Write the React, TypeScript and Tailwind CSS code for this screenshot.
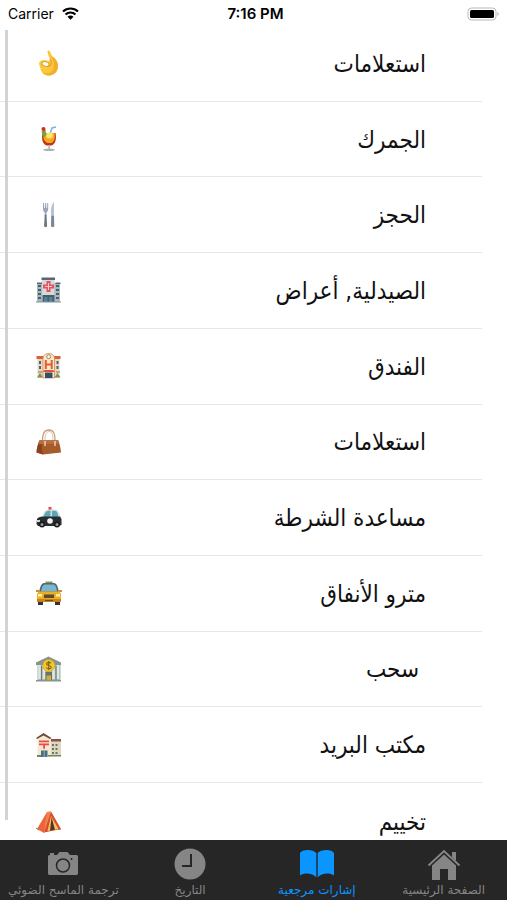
import type { ReactNode } from 'react';
import clsx from 'clsx';

interface ICategory {
  id: string;
  title: string;
  icon: ReactNode;
}

interface ITab {
  id: string;
  title: string;
  icon: ReactNode;
}

const categories: ICategory[] = [
  {
    id: 'basics',
    title: 'استعلامات',
    icon: (
      <>
        <path
          d="M11.500 2c0-1.800 2-1.900 2.600-.3l2.200 4.800c3.700 2 5.700 5.500 5.700 9.500 0 5.500-4 9.500-9 9.500-4 0-6.500-2-7.800-4.500L3.400 15c-.8-2.500.6-4.500 3-4.700 2.500-.3 5 0 6.600.7l1-2.500c-1.300-2-2.300-4.500-2.500-6.500z"
          fill="#fcc73c"
        />
        <path d="m15 6 2 1c3 2 5 5.500 5 9 0 5-3.500 9.500-9 9.500-3 0-5.500-1.500-7-3 5 2 10 .5 11.500-4 1-4 0-8.500-2.500-12.500z" fill="#f0b02c" />
        <ellipse cx="9.500" cy="14" rx="3.600" ry="2.200" transform="rotate(15 9.500 14)" fill="#fff" stroke="#dd961c" strokeWidth="1" />
        <path d="M14 8.500c1.700 2.500 1.700 6-.5 8" fill="none" stroke="#df9a20" strokeWidth="1" />
      </>
    ),
  },
  {
    id: 'customs',
    title: 'الجمرك',
    icon: (
      <>
        <path d="m14 8 2-6 4-1" fill="none" stroke="#72b8df" strokeWidth="1.500" />
        <path d="M6.500 7h13c1 5 .5 11-4 12.500h-5C6 18 5.500 12 6.500 7z" fill="#c3341b" />
        <path d="M7.500 7h11c.8 4 0 8.500-3 10h-4c-4-1.500-4.500-6-4-10z" fill="#f5a91e" />
        <ellipse cx="13.500" cy="9.500" rx="3.500" ry="3" fill="#ffe36b" />
        <path d="m5.500 5 4-1 1 5-3 3z" fill="#75a53a" />
        <circle cx="7.500" cy="3" r="2" fill="#cf2a25" />
        <path d="M12.300 19.500h1.700V23h-1.700z" fill="#b9bcc0" />
        <ellipse cx="13" cy="23.800" rx="6" ry="1.200" fill="#adb0b3" />
      </>
    ),
  },
  {
    id: 'booking',
    title: 'الحجز',
    icon: (
      <>
        <path d="M7 1h1l.3 5h.7l.2-5h1l.2 5h.7L11.300 1h.9v6c0 2-1 3-1.700 3.500V14H8.700v-3.500C8 10 7 9 7 7z" fill="#9aa6b5" />
        <path d="M8.700 13h1.800l.6 11c0 1.500-3 1.500-3 0z" fill="#6d7580" />
        <path d="M17.500.5c-2 2-3 6-2.500 13h3V.5z" fill="#b5c4d6" />
        <path d="M15.200 13.500H18l.3 10.500c0 1.500-3.300 1.500-3.300 0z" fill="#7c8796" />
      </>
    ),
  },
  {
    id: 'pharmacy',
    title: 'الصيدلية, أعراض',
    icon: (
      <>
        <path d="M1 6h7v19H1zM18 6h6v19h-6z" fill="#a9b6bd" />
        <path d="M1 5.500h5V7H1zM19.500 5.500h5V7h-5zM5.500.5H19V3H5.500z" fill="#596770" />
        <path d="M6 3h12.500v22H6z" fill="#d6d8d9" />
        <path d="M2 9h3M2 13h3M2 17h3M2 21h3M20 9h3M20 13h3M20 17h3M20 21h3" stroke="#426174" strokeWidth="2" />
        <path d="M10.500 4h4v3.500H18v4h-3.500V15h-4v-3.500H7v-4h3.500z" fill="#e45260" />
        <path d="M12.500 6v7M9 9.500h7" stroke="#f6c9cd" strokeWidth="1" />
        <path d="M6.500 18h12v7h-12z" fill="#4c5b64" />
        <path d="M8 20h3.500v5H8zM13 20h3.500v5H13z" fill="#4a84a5" />
        <path d="M0 24.500h25v1H0z" fill="#81949c" />
      </>
    ),
  },
  {
    id: 'hotel',
    title: 'الفندق',
    icon: (
      <>
        <path d="M1.500 4h22v21h-22z" fill="#e5d9c0" />
        <path d="M.5 3h24v3H.5z" fill="#dc6139" />
        <path d="M7 25V5c0-6 11.500-6 11.500 0v20z" fill="#f7e9cb" stroke="#d6754d" strokeWidth=".7" />
        <circle cx="12.700" cy="3.700" r="2" fill="#fff3ce" stroke="#88764c" strokeWidth=".8" />
        <path d="M3 8h2v3H3zM3 13h2v3H3zM20.500 8h2v3h-2zM20.500 13h2v3h-2z" fill="#4c6375" />
        <path d="M9.800 7v9M15.700 7v9M9.800 11.500h6" stroke="#e35b2e" strokeWidth="2" />
        <path d="m6.500 19 2-2h8.500l2 2z" fill="#dd5633" />
        <path d="M9 19.500h7.500V25H9z" fill="#345066" />
        <path d="M1 24.500 4 20l3 4.500M18.500 24.500l3-4.500 3 4.500" fill="#7d9354" />
        <path d="M2 19h4M20 19h4" stroke="#b79773" strokeWidth="1.500" />
      </>
    ),
  },
  {
    id: 'shopping',
    title: 'استعلامات',
    icon: (
      <>
        <path d="M6.500 13C6.500 6 7.500 1 13 1s6 5 6 12" fill="none" stroke="#c69f86" strokeWidth="1.300" />
        <path d="M9 13c0-6 .5-10 4-10.500s4 4.500 4 10.500" fill="none" stroke="#e2c6b3" strokeWidth="1" />
        <path d="M3.500 11.500 22 11c1.500 3 2.700 8 3 12.500L7 25.500.5 23.500c.2-4 1.500-9 3-12z" fill="#a65b2b" />
        <path d="M3.500 11.500c-1.500 3-2.800 8-3 12l6.500 2c-1-4-1.500-9-1-14z" fill="#8a441d" />
        <path d="m3.500 11.500 18.500-.5 1.300 3.500-21 .5z" fill="#bc7040" />
        <path d="M9 12v5M19 12v5" stroke="#e6cdbd" strokeWidth="1.500" />
      </>
    ),
  },
  {
    id: 'police',
    title: 'مساعدة الشرطة',
    icon: (
      <>
        <path d="M12.500 2h3v3h-3z" fill="#e74848" />
        <path d="M6 13c1-5 3-8.500 6-8.500h7c3 0 4.500 4 6 9v4H6z" fill="#d9dee0" />
        <path d="M7.500 12c1-4 2.500-6.300 5-6.300h2V12zM16 5.700h3c2 0 3 3 3.500 6.300H16z" fill="#5ba9b8" />
        <path d="M1 14c1-2 4-2.500 8-2.500h15l1.500 2.500v6l-3 1H2l-1.500-2z" fill="#292d30" />
        <circle cx="14" cy="16" r="2.800" fill="#f4f4f2" />
        <path d="M1 15h3v2H1z" fill="#d3d7d5" />
        <circle cx="6" cy="19.500" r="3" fill="#161a1d" />
        <circle cx="21" cy="19.500" r="3" fill="#161a1d" />
        <circle cx="6" cy="19.500" r="1.500" fill="#929a9f" />
        <circle cx="21" cy="19.500" r="1.500" fill="#929a9f" />
      </>
    ),
  },
  {
    id: 'metro',
    title: 'مترو الأنفاق',
    icon: (
      <>
        <path d="M9.500 1.500h7v3h-7z" fill="#88994c" />
        <path d="M2 19h5v6H2zM19 19h5v6h-5z" fill="#303338" />
        <path d="M3 13C4 6 5.500 3.500 8 3h10c2.500.5 4 3 5 10z" fill="#526774" />
        <path d="M5 11.500c.7-4.500 2-7 4-7h8c2 0 3.500 2.500 4 7z" fill="#79b6d2" />
        <path d="M1 13.500 3 11.500h20l2 2v8.500H1z" fill="#eeae24" />
        <path d="M0 10h3v2H0zM23 10h3v2h-3z" fill="#d98e24" />
        <path d="M8 14.500h10V18H8z" fill="#574d30" />
        <path d="M2 14h4v2.500H2zM20 14h4v2.500h-4z" fill="#fff1ac" />
        <path d="M1 19h24v3H1z" fill="#c98216" />
        <path d="M9 20h8v1H9z" fill="#5d5030" />
      </>
    ),
  },
  {
    id: 'withdraw',
    title: '\u00A0سحب',
    icon: (
      <>
        <path d="M1.500 7 12.500 1l12 6v18h-23z" fill="#a7b8b1" />
        <path d="m0 6.500 12.500-6L25 6.500V9H0z" fill="#84958f" />
        <path d="M3.500 9v14M8 9v14M17.500 9v14M22 9v14" stroke="#e1e7df" strokeWidth="2.500" />
        <path d="M5.500 10v14M20 10v14" stroke="#657d7d" strokeWidth="1" />
        <path d="M9.500 16H16v9H9.500z" fill="#65756d" />
        <path d="M10.500 19.500h4.500v4.500h-4.500z" fill="#d8aa31" />
        <circle cx="12.700" cy="9.500" r="6" fill="#f4c72a" stroke="#d8a51c" strokeWidth=".8" />
        <path
          d="M15 7.300c-1-1.500-4.500-1.200-4.500.6 0 2 4.700 1.200 4.700 3.300 0 1.800-3.800 2-4.900.3M12.700 5v9"
          fill="none"
          stroke="#776126"
          strokeWidth="1.100"
        />
        <path d="M0 24h25v1.500H0z" fill="#84958f" />
      </>
    ),
  },
  {
    id: 'post',
    title: 'مكتب البريد',
    icon: (
      <>
        <path d="M14 8h11v16H14z" fill="#ddd8bb" />
        <path d="M14 7h11v2.500H14z" fill="#8a5049" />
        <path d="M16 12h2v2h-2zM19.500 12h2v2h-2zM16 16h2v2h-2zM19.500 16h2v2h-2zM16 20h2v2h-2zM19.500 20h2v2h-2z" fill="#66766f" />
        <path d="M1.500 5.500 8 2l7 3.500V25H1.500z" fill="#f2e9ce" />
        <path d="m0 6 7.500-5L15.500 6 14 7 7.500 3.500 1 7z" fill="#665044" />
        <path d="M3 8.500h10v1.700H3zM3 11.500h10v1.700H9v3.500H7.200v-3.500H3z" fill="#ed4a4c" />
        <path d="M5 18.500h6.500V25H5z" fill="#477084" />
        <path d="M8.200 19v6" stroke="#a9c2ca" strokeWidth=".8" />
        <path d="M1 23h4v2H1zM12 23h13v1.500H12z" fill="#75825c" />
      </>
    ),
  },
  {
    id: 'camping',
    title: 'تخييم',
    icon: (
      <>
        <path d="M11 4 1 21l7 4 8-19z" fill="#ed6639" />
        <path d="M15 3.500 25 21 8 24.500z" fill="#d94b2b" />
        <path d="M15 8 22.500 21l-11 2z" fill="#f1c45f" />
        <path d="m15.500 9 3.500 12.700-5 1z" fill="#593427" />
        <path d="m11 4 4-1-7 22" fill="#f18354" />
        <path d="m0 20 3 2M25 21l-3 .5" stroke="#ad6b4a" strokeWidth="1" />
      </>
    ),
  },
];

const tabs: ITab[] = [
  {
    id: 'home',
    title: 'الصفحة الرئيسية',
    icon: (
      <>
        <path d="M1.500 17.500 17 3l15.500 14.500" fill="none" stroke="currentColor" strokeWidth="2" />
        <path d="M25 4h4v9l-4-4zM5 17.500 17 6.500l12 11V32h-8V21h-8v11H5z" fill="currentColor" />
      </>
    ),
  },
  {
    id: 'phrases',
    title: 'إشارات مرجعية',
    icon: (
      <path
        d="M0 5c2-4 13-4 16.300 0v24.500C13 25.500 5 24 0 27.500zM17.700 5C21 1 32 1 34 5v22.500c-5-3.500-13-2-16.300 2z"
        fill="currentColor"
      />
    ),
  },
  {
    id: 'history',
    title: 'التاريخ',
    icon: (
      <>
        <circle cx="17" cy="16" r="15.500" fill="currentColor" />
        <path d="M18 6v12H9" fill="none" stroke="#262626" strokeWidth="2" />
      </>
    ),
  },
  {
    id: 'scanner',
    title: 'ترجمة الماسح الضوئي',
    icon: (
      <>
        <path
          d="M4 5h4v2h3l2.500-3h8L24 7h6c1.500 0 2 .5 2 2v16c0 1.500-.5 2-2 2H4c-1.500 0-2-.5-2-2V9c0-1.500.5-2 2-2z"
          fill="currentColor"
        />
        <circle cx="17" cy="17.500" r="6.500" fill="none" stroke="#262626" strokeWidth="1.500" />
        <circle cx="25.500" cy="11" r="1" fill="#262626" />
      </>
    ),
  },
];

function StatusBar() {
  return (
    <header
      dir="ltr"
      className="grid h-[26px] shrink-0 grid-cols-3 items-center px-2 pt-px font-['Inter',sans-serif] text-sm leading-5 text-black"
    >
      <div className="flex items-center gap-2">
        <span>Carrier</span>
        <svg viewBox="0 0 17 13" className="h-[13px] w-[17px]" aria-hidden="true">
          <path d="M1 4.500c4.300-4 10.700-4 15 0M3.500 7.500c3-2.700 7-2.700 10 0" fill="none" stroke="#000" strokeWidth="2.200" />
          <path d="M5.500 9.700c1.800-1.500 4.200-1.500 6 0l-3 3z" fill="#000" />
        </svg>
      </div>
      <span className="pl-1 text-center text-[15px] font-semibold">7:16 PM</span>
      <svg viewBox="0 0 32 14" className="h-[14px] w-8 justify-self-end" aria-label="Battery">
        <rect x="1" y="1" width="28" height="12" rx="3.500" fill="#fff" stroke="#b8b8b8" />
        <rect x="3" y="3" width="24" height="8" rx="1.500" fill="#000" />
        <path d="M30.500 5c1.500.5 1.500 3.500 0 4z" fill="#aaa" />
      </svg>
    </header>
  );
}

function CategoryRow({ category, isLast }: { category: ICategory; isLast: boolean }) {
  return (
    <li
      className={clsx(
        'mr-[25px]',
        isLast ? 'h-[57px] shrink-0 overflow-hidden' : 'flex min-h-14 flex-1 border-b border-[#e6e6e6]',
      )}
    >
      <a
        href={`#${category.id}`}
        className={clsx('flex w-full items-center justify-between pr-14 pl-9', isLast && 'h-[76px]')}
      >
        <span className="pt-px text-2xl leading-8">{category.title}</span>
        <svg viewBox="0 0 26 26" className="size-[26px] shrink-0" aria-hidden="true">
          {category.icon}
        </svg>
      </a>
    </li>
  );
}

export default function App() {
  const activeTab = 'phrases';

  return (
    <div
      dir="rtl"
      lang="ar"
      className="flex h-screen flex-col overflow-hidden bg-white font-['DejaVu_Sans_Condensed','DejaVu_Sans',sans-serif] text-[#111]"
    >
      <StatusBar />

      <main className="relative flex min-h-0 flex-1 flex-col">
        <ul className="flex min-h-0 flex-1 flex-col overflow-hidden">
          {categories.map((category, index) => (
            <CategoryRow key={category.id} category={category} isLast={index === categories.length - 1} />
          ))}
        </ul>
        {/* Scroll indicator */}
        <div className="absolute top-1 bottom-5 left-[5px] w-[3px] bg-[#d3d3d3]" />
      </main>

      <nav className="grid h-[60px] shrink-0 grid-cols-4 bg-[#262626] font-['DejaVu_Sans',sans-serif]">
        {tabs.map(tab => (
          <button
            key={tab.id}
            type="button"
            aria-current={tab.id === activeTab ? 'page' : undefined}
            className={clsx(
              'flex flex-col items-center pt-2 whitespace-nowrap',
              tab.id === activeTab ? 'text-[#0a95ff]' : 'text-[#858585]',
            )}
          >
            <svg viewBox="0 0 34 34" className="size-[34px] shrink-0" aria-hidden="true">
              {tab.icon}
            </svg>
            <span className="text-xs leading-4">{tab.title}</span>
          </button>
        ))}
      </nav>
    </div>
  );
}
